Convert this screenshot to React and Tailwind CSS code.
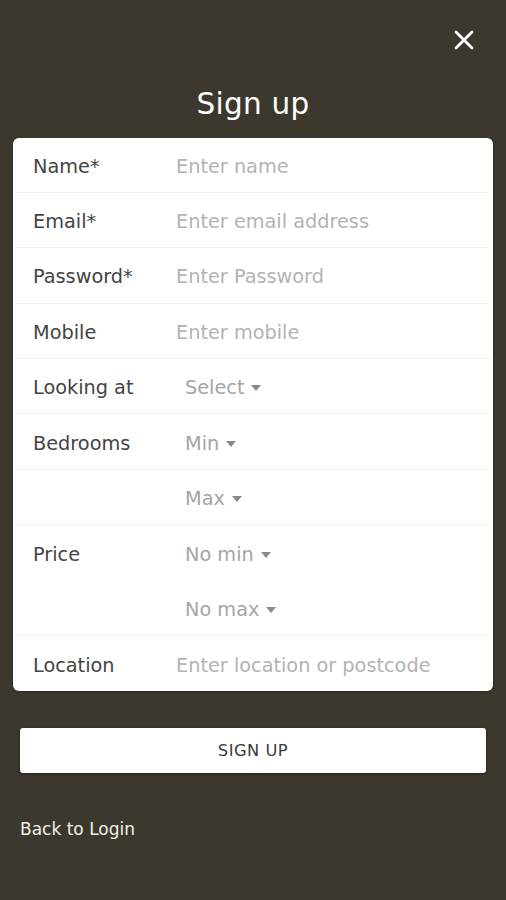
import React from 'react';

const font = { fontFamily: '"DejaVu Sans", "Liberation Sans", sans-serif' };

const Caret = () => (
  <svg width="10" height="6" viewBox="0 0 10 6" className="ml-[7px] mt-[1px]">
    <path d="M0 0 L10 0 L5 6 Z" fill="#8a8a8a" />
  </svg>
);

const rows = [
  { label: 'Name*', placeholder: 'Enter name' },
  { label: 'Email*', placeholder: 'Enter email address' },
  { label: 'Password*', placeholder: 'Enter Password' },
  { label: 'Mobile', placeholder: 'Enter mobile' },
  { label: 'Looking at', select: 'Select' },
  { label: 'Bedrooms', select: 'Min' },
  { label: '', select: 'Max' },
  { label: 'Price', select: 'No min', noLine: true },
  { label: '', select: 'No max' },
  { label: 'Location', placeholder: 'Enter location or postcode', last: true },
];

export default function App() {
  return (
    <div className="min-h-[900px] w-full bg-[#3d382e] flex flex-col" style={font}>
      <div className="flex justify-end pt-[30px] pr-[32px]">
        <svg width="20" height="20" viewBox="0 0 20 20">
          <path d="M2 2 L18 18 M18 2 L2 18" stroke="#ffffff" strokeWidth="2.8" strokeLinecap="round" />
        </svg>
      </div>
      <h1 className="text-center text-white text-[29.5px] leading-none mt-[40px] tracking-[0.3px]">Sign up</h1>
      <div className="mx-[13px] mt-[18px] bg-white rounded-[6px] shadow-[0_1px_3px_rgba(0,0,0,0.3)] overflow-hidden">
        {rows.map((r, i) => (
          <div
            key={i}
            className={
              'h-[55.4px] flex items-center mx-[3px] pt-[3px] ' +
              (r.last || r.noLine ? '' : 'border-b border-[#f2f2f2]')
            }
          >
            <div className="w-[160px] pl-[17px] text-[19.3px] leading-none text-[#444444] shrink-0">{r.label}</div>
            {r.select ? (
              <div className="flex items-center pl-[9px] text-[19.3px] leading-none text-[#a5a5a5]">
                {r.select}
                <Caret />
              </div>
            ) : (
              <div className="text-[19.3px] leading-none text-[#b3b3b3]">{r.placeholder}</div>
            )}
          </div>
        ))}
      </div>
      <button className="mx-[20px] mt-[37px] h-[45px] bg-white rounded-[3px] shadow-[0_1px_3px_rgba(0,0,0,0.45)] text-[#3a3a3a] text-[16.3px] tracking-[0.5px]">
        SIGN UP
      </button>
      <div className="ml-[20px] mt-[44px] text-[#f2efe6] text-[17px]">Back to Login</div>
    </div>
  );
}
